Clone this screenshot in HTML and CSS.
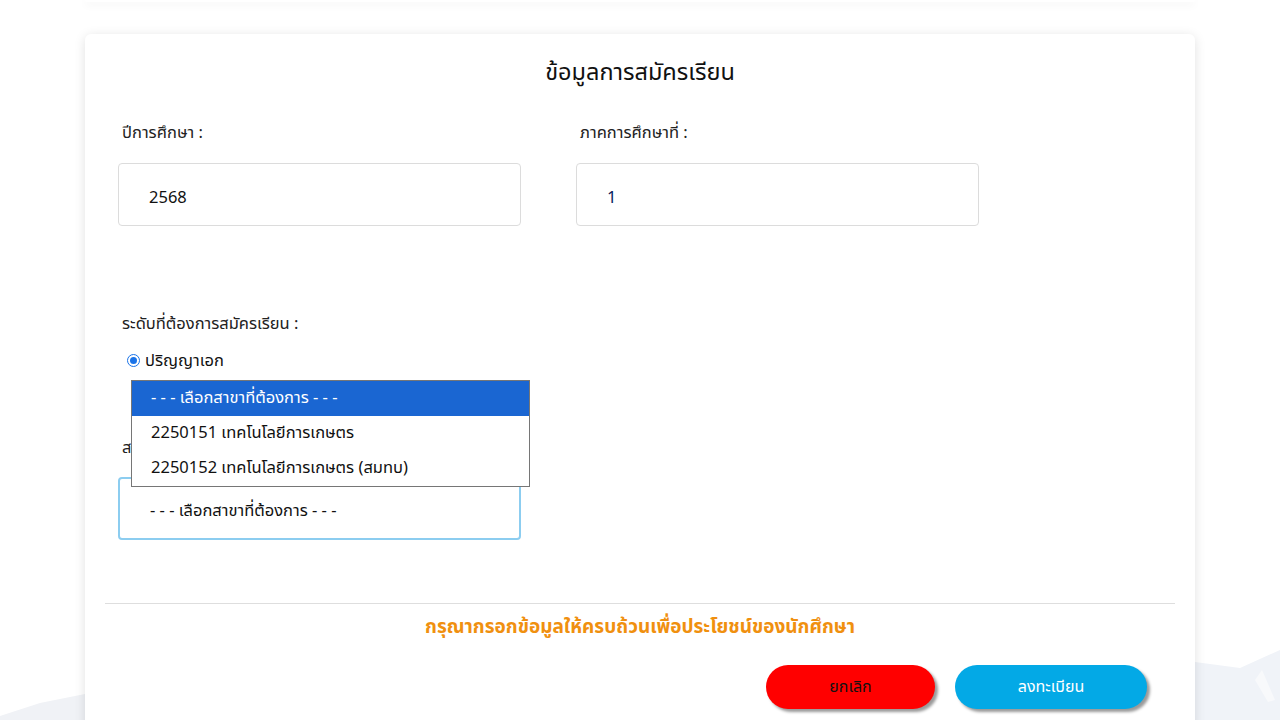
FILE: index.html
```html
<!DOCTYPE html>
<html lang="th">
<head>
<meta charset="utf-8">
<title>ข้อมูลการสมัครเรียน</title>
<link rel="stylesheet" href="styles.css">
</head>
<body>
<svg class="bg" width="1280" height="720" viewBox="0 0 1280 720" aria-hidden="true">
  <polygon points="0,720 0,716 40,703 85,694 85,720" fill="#f0f2f6"/>
  <polygon points="1195,662 1240,668 1280,650 1280,720 1195,720" fill="#f0f3f8"/>
  <polygon points="1255,680 1262,670 1275,700 1268,702" fill="#f8f9fb"/>
</svg>
<div class="page">
  <div class="topcard"></div>
  <div class="card">
    <h2 class="title">ข้อมูลการสมัครเรียน</h2>
    <div class="row">
      <div class="col">
        <label class="lbl">ปีการศึกษา :</label>
        <div class="field">2568</div>
      </div>
      <div class="col">
        <label class="lbl">ภาคการศึกษาที่ :</label>
        <div class="field field-dark">1</div>
      </div>
    </div>
    <div class="section">
      <label class="lbl">ระดับที่ต้องการสมัครเรียน :</label>
      <div class="radio-row">
        <span class="radio"><span class="dot"></span></span>
        <span>ปริญญาเอก</span>
      </div>
      <div class="select-wrap">
        <label class="lbl lbl-major">สาขาวิชาที่ต้องการสมัคร :</label>
        <div class="field field-focus">- - - เลือกสาขาที่ต้องการ - - -</div>
        <ul class="dropdown">
          <li class="opt opt-active">- - - เลือกสาขาที่ต้องการ - - -</li>
          <li class="opt">2250151 เทคโนโลยีการเกษตร</li>
          <li class="opt">2250152 เทคโนโลยีการเกษตร (สมทบ)</li>
        </ul>
      </div>
    </div>
    <div class="divider"></div>
    <p class="notice">กรุณากรอกข้อมูลให้ครบถ้วนเพื่อประโยชน์ของนักศึกษา</p>
    <div class="actions">
      <button class="btn btn-cancel">ยกเลิก</button>
      <button class="btn btn-submit">ลงทะเบียน</button>
    </div>
  </div>
</div>
</body>
</html>
```
FILE: styles.css
```css
* { box-sizing: border-box; }
html, body { margin: 0; padding: 0; }
body {
  width: 1280px;
  height: 720px;
  overflow: hidden;
  background: #ffffff;
  font-family: "Noto Sans", "Noto Sans Thai", sans-serif;
  color: #111;
  position: relative;
}
.bg {
  position: absolute;
  left: 0;
  top: 0;
  z-index: 0;
}
.page {
  position: relative;
  z-index: 1;
  width: 1110px;
  margin: 0 auto;
  display: flex;
  flex-direction: column;
  gap: 32px;
}
.topcard {
  height: 2px;
  background: #fff;
  border-radius: 0 0 6px 6px;
  box-shadow: 0 2px 8px rgba(0,0,0,0.10);
}
.card {
  background: #fff;
  border-radius: 6px;
  box-shadow: 0 2px 12px rgba(0,0,0,0.12);
  padding: 20px 20px 30px 20px;
  height: 720px;
}
.title {
  margin: 0;
  text-align: center;
  font-weight: 400;
  font-size: 23.5px;
  line-height: 34px;
  color: #111;
}
.row {
  display: flex;
  margin-top: 32px;
  padding-left: 13px;
}
.col {
  width: 458px;
  display: flex;
  flex-direction: column;
}
.lbl {
  display: block;
  padding-left: 4px;
  font-size: 16.5px;
  line-height: 24px;
  color: #222;
}
.field {
  margin-top: 19px;
  width: 403px;
  height: 63px;
  border: 1px solid #dcdcdc;
  border-radius: 4px;
  padding-left: 30px;
  padding-top: 3px;
  display: flex;
  align-items: center;
  font-size: 16.5px;
  color: #111;
}
.field-dark { color: #0a1a5c; }
.section {
  padding-left: 13px;
  margin-top: 85px;
  position: relative;
}
.radio-row {
  display: flex;
  align-items: center;
  gap: 5px;
  margin-top: 13px;
  padding-left: 9px;
  font-size: 16.5px;
  line-height: 24px;
}
.radio {
  width: 13px; height: 13px;
  border-radius: 50%;
  border: 1px solid #1a73e8;
  display: flex;
  align-items: center;
  justify-content: center;
  background: #fff;
}
.dot {
  width: 7px; height: 7px;
  border-radius: 50%;
  background: #1a73e8;
}
.select-wrap {
  position: relative;
  margin-top: 63px;
}
.field-focus {
  margin-top: 18px;
  border: 2px solid #8ccdf0;
  padding-left: 30px;
  padding-top: 4px;
}
.dropdown {
  position: absolute;
  left: 13px;
  top: -55px;
  width: 399px;
  margin: 0;
  padding: 0;
  list-style: none;
  background: #fff;
  border: 1px solid #767676;
  z-index: 5;
}
.opt {
  height: 35px;
  line-height: 31px;
  padding-bottom: 4px;
  padding-left: 19px;
  font-size: 16.5px;
  color: #111;
}
.opt-active {
  background: #1a66d2;
  color: #fff;
}
.divider {
  margin-top: 63px;
  height: 1px;
  background: #dedede;
}
.notice {
  margin: 8px 0 0 0;
  text-align: center;
  font-size: 19px;
  line-height: 28px;
  font-weight: 700;
  color: #f0900f;
}
.actions {
  display: flex;
  justify-content: flex-end;
  gap: 20px;
  padding-right: 28px;
  margin-top: 25px;
}
.btn {
  height: 44px;
  border: none;
  border-radius: 22px;
  font-family: inherit;
  font-size: 16px;
  box-shadow: 3px 3px 3px rgba(0,0,0,0.4);
}
.btn-cancel {
  width: 169px;
  background: #ff0000;
  color: #111;
}
.btn-submit {
  width: 192px;
  background: #03a9e6;
  color: #fff;
}
```
